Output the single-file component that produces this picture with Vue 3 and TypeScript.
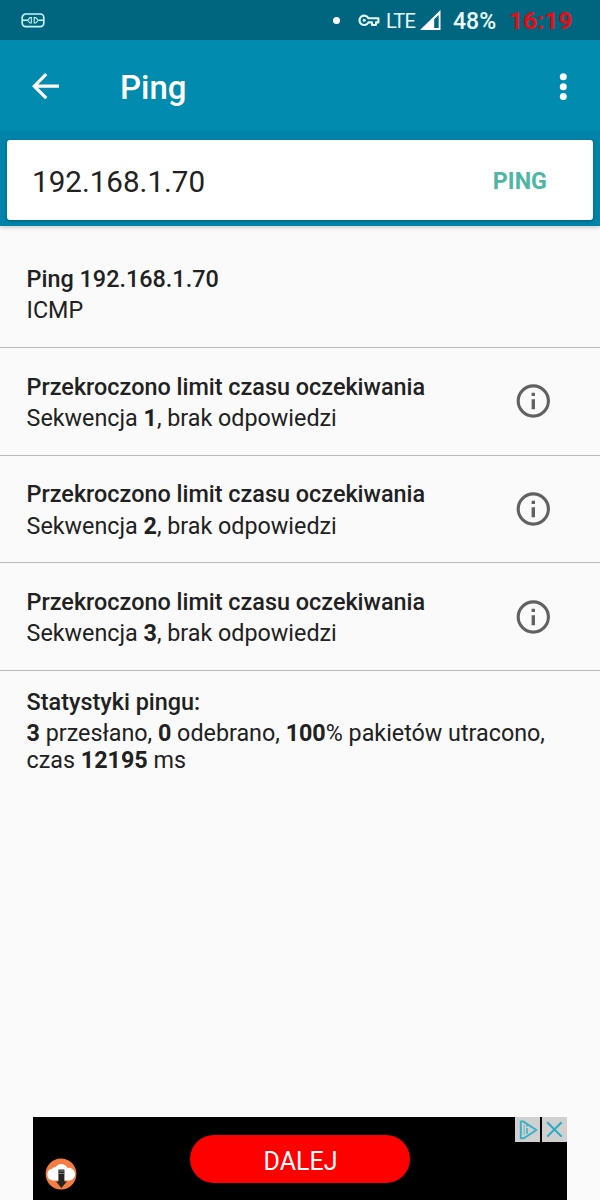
<script setup lang="ts">
interface Attempt {
  sequence: number
}

const address: string = '192.168.1.70'
const attempts: Attempt[] = [{ sequence: 1 }, { sequence: 2 }, { sequence: 3 }]
</script>

<template>
  <div class="screen">
    <header class="status-bar">
      <svg class="dock-icon" width="24" height="15" viewBox="0 0 24 15" fill="none" stroke="#c5f4fb">
        <rect x="1.2" y="1" width="21.6" height="12.6" rx="3.6" stroke-width="1.7" />
        <path d="M1.5 7.3H6.5M17.5 7.3H22.5" stroke-width="1.5" />
        <path d="M10.3 4.6H9L6.6 7.3L9 10H10.3ZM13.2 4.6V10H14.8L17.2 7.3L14.8 4.6Z" stroke-width="1.1" />
      </svg>
      <div class="status-right">
        <span class="dot"></span>
        <svg class="key" width="22" height="13" viewBox="0 0 22 13" fill="none" stroke="#e6fbff" stroke-width="2.1">
          <path d="M10.4 4.3A4.7 4.7 0 1 0 10.4 8.4H14V11H18V8.4H20.4V4.3Z" stroke-linejoin="round" />
          <circle cx="6.2" cy="6.3" r="1.5" fill="#e6fbff" stroke="none" />
        </svg>
        <span class="lte">LTE</span>
        <svg class="signal" width="21" height="20" viewBox="0 0 21 20">
          <path d="M20.5 0V20H0Z" fill="#fff" />
          <path d="M18.7 5V18H14.2V9.3Z" fill="#006680" />
        </svg>
        <span class="battery">48%</span>
        <span class="clock">16:19</span>
      </div>
    </header>

    <div class="toolbar">
      <svg class="back" width="28" height="28" viewBox="0 0 28 28" fill="none" stroke="#fff" stroke-width="3.2">
        <path d="M27 13.2H2.5M14.2 1.2L2.2 13.2L14.2 25.2" />
      </svg>
      <h1>Ping</h1>
      <svg class="more" width="8" height="28" viewBox="0 0 8 28" fill="#fff">
        <circle cx="4.3" cy="3.8" r="3.5" />
        <circle cx="4.3" cy="13.7" r="3.5" />
        <circle cx="4.3" cy="23.6" r="3.5" />
      </svg>
    </div>

    <div class="search-strip">
      <div class="search-card">
        <span class="address">{{ address }}</span>
        <span class="ping">PING</span>
      </div>
    </div>

    <main class="results">
      <section class="row">
        <div>
          <div class="title">Ping {{ address }}</div>
          <div class="sub">ICMP</div>
        </div>
      </section>
      <section v-for="attempt in attempts" :key="attempt.sequence" class="row">
        <div>
          <div class="title">Przekroczono limit czasu oczekiwania</div>
          <div class="sub">Sekwencja <b>{{ attempt.sequence }}</b>, brak odpowiedzi</div>
        </div>
        <svg class="info" width="34" height="34" viewBox="0 0 34 34">
          <circle cx="17.3" cy="17" r="15.1" fill="none" stroke="#616161" stroke-width="3.1" />
          <path d="M15.6 8.7H19V12H15.6ZM15.6 15.2H19V25.3H15.6Z" fill="#616161" />
        </svg>
      </section>
      <section class="stats">
        <div class="title">Statystyki pingu:</div>
        <div class="sub"><b>3</b> przesłano, <b>0</b> odebrano, <b>100</b>% pakietów utracono,<br />czas <b>12195</b> ms</div>
      </section>
    </main>

    <footer class="ad">
      <svg class="cloud" width="32" height="32" viewBox="0 0 32 32">
        <circle cx="16" cy="16" r="15.4" fill="#f57d42" />
        <path d="M7.5 22.5A6 6 0 0 1 7 10.7A5 5 0 0 1 10.5 9A7 7 0 0 1 22.5 10A6.3 6.3 0 0 1 25 22.5Z" fill="#fff" />
        <path d="M13.4 11.5H19.4V23.5H22L16.4 30L11 23.5H13.4Z" fill="#242424" />
        <path d="M13.4 13H19.4M13.4 15.5H19.4" stroke="#999" stroke-width=".8" />
      </svg>
      <div class="cta">DALEJ</div>
      <div class="ad-controls">
        <svg width="25" height="25" viewBox="0 0 25 25" fill="none" stroke="#35b1c8" stroke-width="1.9">
          <path d="M5.8 4.4V21.3H8.8L21.4 13L8 4.4Z" stroke-linejoin="round" />
          <path d="M12 8V9.4M12 11V17" stroke-width="1.5" />
          <path d="M9.2 8V18" stroke-width=".7" />
        </svg>
        <svg width="25" height="25" viewBox="0 0 25 25" fill="none" stroke="#24abc6" stroke-width="2">
          <path d="M5.2 5.2L19.6 19.6M19.6 5.2L5.2 19.6" />
        </svg>
      </div>
    </footer>
  </div>
</template>

<style>
body {
  margin: 0;
}
</style>

<style scoped>
.screen {
  width: 600px;
  height: 1200px;
  display: flex;
  flex-direction: column;
  overflow: hidden;
  background: #fafafa;
  color: #212121;
  font-family: Roboto, 'Liberation Sans', sans-serif;
}
.status-bar {
  flex: none;
  box-sizing: border-box;
  height: 40px;
  padding: 0 26px 0 21px;
  display: flex;
  align-items: center;
  justify-content: space-between;
  background: #006680;
  color: #ebfcff;
}
.status-right {
  display: flex;
  align-items: center;
  white-space: nowrap;
}
.dot {
  width: 7px;
  height: 7px;
  border-radius: 50%;
  background: #fff;
  margin-right: 18px;
}
.key {
  margin-top: 1px;
}
.lte {
  width: 28px;
  margin-left: 6px;
  padding-top: 1px;
  font-size: 20px;
  line-height: 24px;
  letter-spacing: -0.8px;
}
.signal {
  margin-left: 6px;
}
.battery {
  width: 44px;
  margin-left: 12px;
  padding-top: 2px;
  font-size: 23px;
  font-weight: 500;
}
.clock {
  width: 65px;
  margin-left: 12px;
  font-size: 24.6px;
  font-weight: 700;
  color: #e80c14;
}
.toolbar {
  flex: none;
  box-sizing: border-box;
  height: 93px;
  padding: 0 33px 0 32px;
  display: flex;
  align-items: center;
  background: #008baf;
  color: #fff;
}
.toolbar h1 {
  margin: 3px auto 0 60px;
  font-size: 33px;
  line-height: 40px;
  font-weight: 500;
}
.search-strip {
  flex: none;
  box-sizing: border-box;
  height: 93px;
  padding: 7px 7px 6px;
  background: #0083a8;
  box-shadow: 0 1px 5px rgba(0, 0, 0, 0.22);
}
.search-card {
  box-sizing: border-box;
  height: 80px;
  padding: 2px 46px 0 25px;
  display: flex;
  align-items: center;
  justify-content: space-between;
  border-radius: 3px;
  background: #fff;
  box-shadow: 0 1px 3px rgba(0, 0, 0, 0.3);
}
.address {
  padding-top: 1px;
  font-size: 29.6px;
}
.ping {
  font-size: 23.3px;
  font-weight: 700;
  color: #4db6a5;
}
.results {
  flex: 1;
  padding-top: 14px;
}
.row {
  box-sizing: border-box;
  height: 107.8px;
  padding: 24.9px 50px 0 26.6px;
  display: flex;
  align-items: flex-start;
  justify-content: space-between;
  border-bottom: 1px solid #b8b8b8;
}
.title {
  font-size: 23.4px;
  line-height: 28px;
  font-weight: 500;
}
.sub {
  margin-top: 4.2px;
  font-size: 23.3px;
  line-height: 27.4px;
  white-space: nowrap;
}
.sub b {
  font-weight: 700;
}
.info {
  margin-top: 11.3px;
}
.stats {
  padding: 16.4px 27px 0 26.6px;
}
.ad {
  flex: none;
  box-sizing: border-box;
  position: relative;
  width: 534px;
  height: 83px;
  margin-left: 33px;
  padding: 18px 0 0 12px;
  display: flex;
  background: #000;
}
.cloud {
  margin-top: 23px;
}
.cta {
  width: 220px;
  height: 48px;
  margin-left: 113px;
  border-radius: 24px;
  background: #f00;
  color: #fff;
  font-size: 25px;
  line-height: 54px;
  text-align: center;
  text-indent: 1px;
}
.ad-controls {
  position: absolute;
  top: 0;
  right: 0;
  display: flex;
  gap: 2px;
}
.ad-controls svg {
  background: #d0d0d0;
}
</style>
